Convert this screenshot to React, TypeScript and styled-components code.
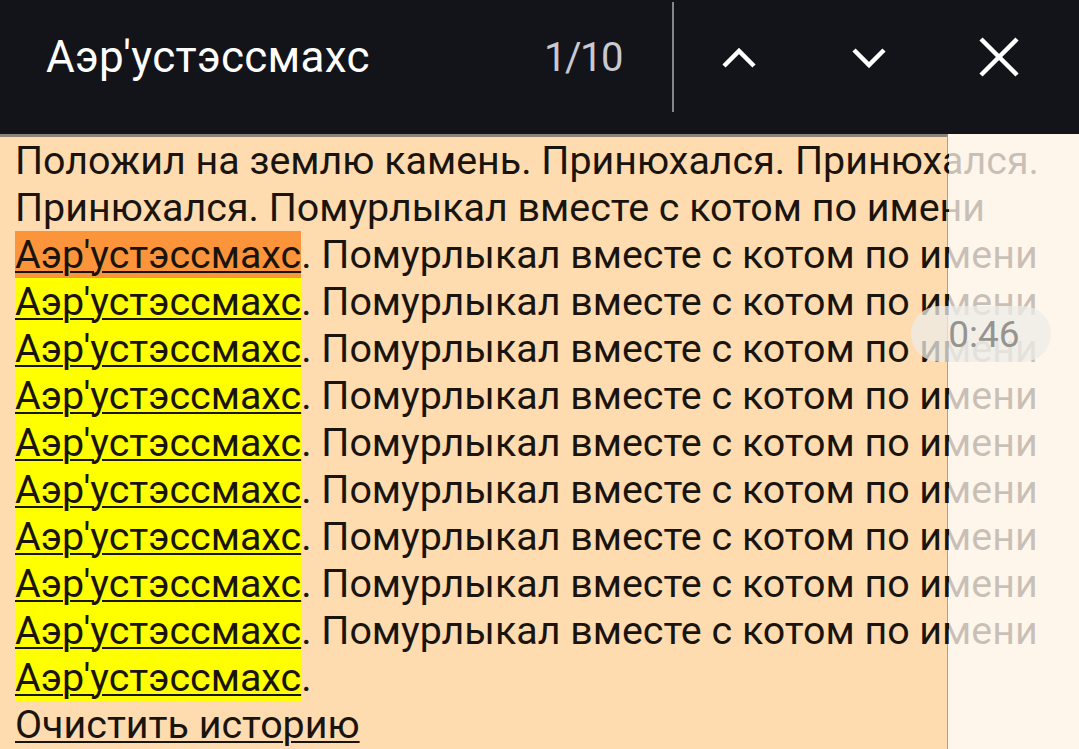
import React from "react";
import styled, { createGlobalStyle } from "styled-components";

const GlobalStyle = createGlobalStyle`
  html, body {
    margin: 0;
    padding: 0;
    width: 1079px;
    height: 749px;
    overflow: hidden;
    background: #fff6eb;
    font-family: Roboto, "Liberation Sans", sans-serif;
  }
`;

const Page = styled.div`
  position: relative;
  width: 1079px;
  height: 749px;
  overflow: hidden;
  display: flex;
  flex-direction: column;
`;

const SearchBar = styled.div`
  height: 114px;
  padding-bottom: 20px;
  background: #131419;
  display: flex;
  align-items: center;
  padding-right: 15px;
`;

const Query = styled.div`
  flex: 1;
  padding-left: 46px;
  color: #ffffff;
  font-size: 44px;
  letter-spacing: 0.3px;
`;

const Counter = styled.div`
  color: #c9c9d1;
  font-size: 40px;
  letter-spacing: -1.5px;
  margin-right: 50px;
`;

const Divider = styled.div`
  width: 2px;
  height: 110px;
  background: #85858c;
`;

const IconButton = styled.div`
  width: 130px;
  height: 114px;
  display: flex;
  align-items: center;
  justify-content: center;
`;

const Content = styled.div`
  flex: 1;
  width: 948px;
  border-top: 3px solid #8c8379;
  border-right: 1px solid #a9a199;
  background: #fedcb0;
  box-sizing: border-box;
  padding: 0 0 0 15px;
  color: #1a140e;
  font-size: 39.4px;
  line-height: 47px;
`;

const Line = styled.div`
  white-space: nowrap;
  height: 47px;
`;

const Match = styled.span<{ $current?: boolean }>`
  display: inline-block;
  background: ${(p) => (p.$current ? "#fb943a" : "#ffff00")};
  text-decoration: underline;
  text-decoration-thickness: 2px;
  text-underline-offset: 3px;
`;

const ClearLink = styled.span`
  text-decoration: underline;
  text-decoration-thickness: 2px;
  text-underline-offset: 3px;
`;

const Fade = styled.div`
  position: absolute;
  top: 134px;
  left: 949px;
  right: 0;
  bottom: 0;
  background: rgba(255, 246, 235, 0.76);
`;

const TimePill = styled.div`
  position: absolute;
  top: 306px;
  left: 911px;
  width: 140px;
  height: 56px;
  border-radius: 28px;
  background: rgba(238, 236, 232, 0.75);
  color: #96948f;
  font-size: 37px;
  display: flex;
  align-items: center;
  justify-content: center;
  padding-left: 6px;
  box-sizing: border-box;
`;

const word = "Аэр'устэссмахс";
const tail = ". Помурлыкал вместе с котом по имени";

export default function App() {
  const matches = Array.from({ length: 9 }, (_, i) => i);
  return (
    <Page>
      <GlobalStyle />
      <SearchBar>
        <Query>{word}</Query>
        <Counter>1/10</Counter>
        <Divider />
        <IconButton>
          <svg width="36" height="24" viewBox="0 0 36 24">
            <path d="M3 21 L18 6 L33 21" fill="none" stroke="#fff" strokeWidth="4.5" />
          </svg>
        </IconButton>
        <IconButton>
          <svg width="36" height="24" viewBox="0 0 36 24">
            <path d="M3 5 L18 20 L33 5" fill="none" stroke="#fff" strokeWidth="4.5" />
          </svg>
        </IconButton>
        <IconButton>
          <svg width="42" height="42" viewBox="0 0 42 42">
            <path d="M3 3 L39 39 M39 3 L3 39" fill="none" stroke="#fff" strokeWidth="4.5" />
          </svg>
        </IconButton>
      </SearchBar>
      <Content>
        <Line>Положил на землю камень. Принюхался. Принюхался.</Line>
        <Line>Принюхался. Помурлыкал вместе с котом по имени</Line>
        {matches.map((i) => (
          <Line key={i}>
            <Match $current={i === 0}>{word}</Match>
            {tail}
          </Line>
        ))}
        <Line>
          <Match>{word}</Match>.
        </Line>
        <Line>
          <ClearLink>Очистить историю</ClearLink>
        </Line>
      </Content>
      <Fade />
      <TimePill>0:46</TimePill>
    </Page>
  );
}
